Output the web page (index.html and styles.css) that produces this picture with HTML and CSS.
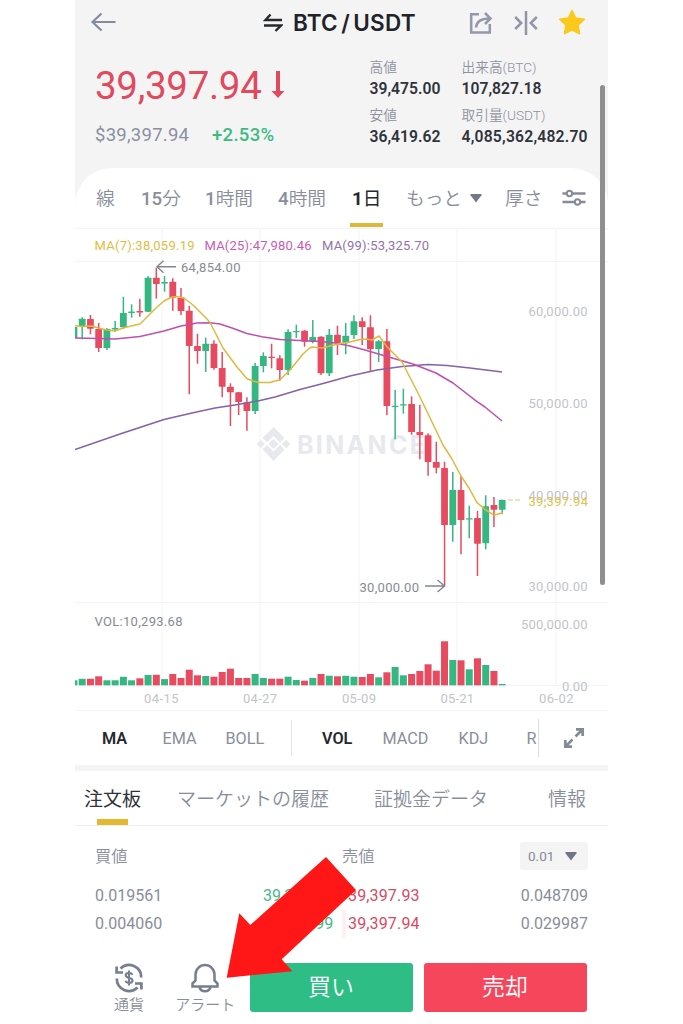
FILE: index.html
```html
<!DOCTYPE html>
<html lang="ja">
<head>
<meta charset="utf-8">
<title>BTC / USDT</title>
<link rel="stylesheet" href="styles.css">
</head>
<body>
<main class="phone">
  <header class="header">
    <div class="titlebar">
      <svg class="ic-back" width="27" height="20" viewBox="0 0 27 20"><path d="M25.500 10H2.500M11.500 1.500L2.500 10l9 8.500" fill="none" stroke="#848b9c" stroke-width="2.200"/></svg>
      <svg class="ic-swap" width="20" height="20" viewBox="0 0 20 20"><path d="M19 7H2.500L7.500 1.500M1 12.500h17L12.500 18" fill="none" stroke="#25282d" stroke-width="2.400"/></svg>
      <h1 class="pair">BTC / USDT</h1>
      <svg class="ic-share" width="24" height="24" viewBox="0 0 24 24"><path d="M10 3.200H2.200V21.600H20.800V13" fill="none" stroke="#9498ab" stroke-width="2.500"/><path d="M7 16.500c.5-6 5-9 13.500-9" fill="none" stroke="#9498ab" stroke-width="2.500"/><path d="M16 2l5.500 5.500-5.500 5.500" fill="none" stroke="#9498ab" stroke-width="2.500"/></svg>
      <svg class="ic-compare" width="24" height="26" viewBox="0 0 24 26"><path d="M12 1v24M1.200 7l6 6-6 6M22.800 7l-6 6 6 6" fill="none" stroke="#9195a5" stroke-width="2.500"/></svg>
      <svg class="ic-star" width="28" height="27" viewBox="0 0 28 27"><path d="M14 1.500l3.600 7.500 8.700 1.200-6.300 6 1.500 8.500L14 20.700l-7.500 4 1.500-8.500-6.300-6 8.700-1.200z" fill="#fbc91b" stroke="#fbc91b" stroke-width="1.600" stroke-linejoin="round"/></svg>
    </div>
    <div class="summary">
      <div class="price-box">
        <div class="price">39,397.94<svg class="ic-down" width="14" height="30" viewBox="0 0 14 30"><path d="M5 1h4v20h4.500L7 28 .5 21H5z" fill="#e04a5e"/></svg></div>
        <div class="sub"><span class="usd">$39,397.94</span><span class="change">+2.53%</span></div>
      </div>
      <dl class="stat"><dt>高値</dt><dd>39,475.00</dd><dt>安値</dt><dd>36,419.62</dd></dl>
      <dl class="stat stat-wide"><dt>出来高(BTC)</dt><dd>107,827.18</dd><dt>取引量(USDT)</dt><dd class="long">4,085,362,482.70</dd></dl>
    </div>
  </header>

  <div class="range-wrap">
    <nav class="ranges">
      <span>線</span><span><b>15</b>分</span><span><b>1</b>時間</span><span><b>4</b>時間</span>
      <span class="active"><b>1</b>日</span>
      <span class="more">もっと<svg width="12" height="9" viewBox="0 0 12 9"><path d="M1 0h10q1 0 .5 1.200L6 8.500.5 1.200Q0 0 1 0z" fill="#6f7a86"/></svg></span>
      <span class="depth">厚さ</span>
      <svg width="24" height="20" viewBox="0 0 24 20"><path d="M.5 5.500h23M.5 14h23" stroke="#858c98" stroke-width="2.600"/><circle cx="7.500" cy="5.500" r="2.700" fill="#fff" stroke="#858c98" stroke-width="2"/><circle cx="15.500" cy="14" r="2.700" fill="#fff" stroke="#858c98" stroke-width="2"/></svg>
    </nav>
  </div>

  <svg class="chart" width="533" height="483" viewBox="75 228 533 483">
    <path class="grid" d="M75 228.500H608M75 261.500H608M75 602.500H608M75 685.500H608M75 710.500H608M162 228V685M260 228V685M359 228V685M457 228V685M556 228V685"/>
    <g class="watermark">
      <path d="M273.500 427l11 11-4.500 4.500-6.500-6.500-6.500 6.500-4.500-4.500zM262.500 449.500l4.500-4.500 6.500 6.500 6.500-6.500 4.500 4.500-11 11.500zM256.500 444l4.200-4.200 4.200 4.200-4.200 4.200zM282 444l4.200-4.200 4.200 4.200-4.200 4.200zM268.500 444l5-5 5 5-5 5z"/>
      <text x="297" y="453.500" textLength="128">BINANCE</text>
    </g>
    <g id="candles"></g>
    <g id="volume"></g>
    <polyline class="ma ma99" points="75,449.500 120,434 164,419.500 192,413 215,408 235,405 260,400.500 275,397 300,389.500 325,383 350,376 377,370 402,366.500 428,364.500 447,365.500 470,368 502,372"/>
    <polyline class="ma ma25" points="75,338 98,338.500 115,339 140,336.500 164,331 181,326 197,323 210,322.700 220,324 232,328 247,333.500 262,336.700 280,339.500 300,340.500 320,341.500 335,343 350,346 365,350 387,356.500 413,364 436,373 453,383 477,401.700 485,407 502,421"/>
    <polyline class="ma ma7" points="75,325.700 82,326.500 92,326 98,328 107,330 115,331 123,328 131,326 140,324 148,316 156,308 164,301 172,297 177,296.500 184,298 193,305 200,312 207,319 210,322.500 223,348 237,367 247,378.700 253,381 260,382.500 270,382.500 280,379.700 290,370 303,354 309,348.500 312,347 322,348 330,346 340,343.500 350,342 360,339.500 366,339 372,340 379,336 387,346.700 402,362 418,393 432,422 443,445 452,459 461,476 469,488 477,502.700 486,510 494,515.300 503,512.700"/>
    <path d="M508 500h14" stroke="#ddc77c" stroke-dasharray="5 2"/>
    <path class="pointer" d="M176 266.700H157M163.500 260.800L157 266.700l6.500 6M425 586h19M437.500 580l7 6-7 6"/>
    <g class="t">
      <text x="94.500" y="250" textLength="100" class="c7">MA(7):38,059.19</text>
      <text x="204.500" y="250" textLength="107" class="c25">MA(25):47,980.46</text>
      <text x="322" y="250" textLength="107" class="c99">MA(99):53,325.70</text>
      <text x="181" y="272" textLength="59.500" class="mark">64,854.00</text>
      <text x="359.500" y="592" textLength="59.500" class="mark">30,000.00</text>
      <text x="94.500" y="625.500" textLength="88" class="mark">VOL:10,293.68</text>
    </g>
    <g class="t axis">
      <text x="528.500" y="316" textLength="59">60,000.00</text>
      <text x="528.500" y="408" textLength="59">50,000.00</text>
      <text x="528.500" y="500" textLength="59">40,000.00</text>
      <text x="528.500" y="591" textLength="59">30,000.00</text>
      <text x="521" y="628.500" textLength="66.500">500,000.00</text>
      <text x="562" y="691" textLength="25.500">0.00</text>
      <text x="144" y="702.500" textLength="34.500">04-15</text>
      <text x="243" y="702.500" textLength="34">04-27</text>
      <text x="342" y="702.500" textLength="34">05-09</text>
      <text x="440.500" y="702.500" textLength="33.500">05-21</text>
      <text x="539" y="702.500" textLength="34.500">06-02</text>
      <text x="528.500" y="506" textLength="59.500" class="last">39,397.94</text>
    </g>
  </svg>

  <nav class="indicators">
    <span class="on">MA</span><span>EMA</span><span>BOLL</span><i class="rule"></i>
    <span class="on">VOL</span><span>MACD</span><span>KDJ</span><span class="cut">R</span>
    <svg width="22" height="22" viewBox="0 0 22 22"><path d="M12.500 9.500L19 3M13 2.300h6.700V9M9.500 12.500L3 19M2.300 13v6.700H9" fill="none" stroke="#848b98" stroke-width="2.700"/></svg>
  </nav>

  <nav class="sections">
    <span class="on">注文板</span><span>マーケットの履歴</span><span>証拠金データ</span><span>情報</span>
  </nav>

  <section class="book">
    <div class="book-head"><span>買値</span><span>売値</span><button class="step">0.01<svg width="12" height="9" viewBox="0 0 12 9"><path d="M1 0h10q1 0 .5 1.200L6 8.500.5 1.200Q0 0 1 0z" fill="#6f7685"/></svg></button></div>
    <div class="book-row"><span>0.019561</span><span class="bid">39,397.92</span><span class="ask">39,397.93</span><span class="qty">0.048709</span></div>
    <div class="book-row tint"><span>0.004060</span><span class="bid">39,390.99</span><span class="ask">39,397.94</span><span class="qty">0.029987</span></div>
  </section>

  <footer class="footer">
    <div class="tool">
      <svg width="30" height="30" viewBox="0 0 30 30"><g fill="none" stroke="#777e8e" stroke-width="2.700"><path d="M6.500 5.500A12.200 12.200 0 0 1 27.200 14.500M2.800 15.500A12.200 12.200 0 0 0 23.500 24.500M2.600 3.500V9.500H9M27.400 26.500V20.500H21"/><path d="M18.300 11.800C17.500 9.500 11.700 9.300 11.700 12.300c0 3.300 6.800 1.800 6.800 5.200 0 3.200-6.200 3-7 .3M15 7.500v15" stroke-width="2.100"/></g></svg>
      <span>通貨</span>
    </div>
    <div class="tool alert">
      <svg width="30" height="30" viewBox="0 0 30 30"><path d="M2.500 23.500v-3l3-3V11.500a9.500 9.500 0 0 1 19 0V17.500l3 3v3zM9.500 24.500c2 5 9 5 11 0" fill="none" stroke="#777e8e" stroke-width="2.500"/></svg>
      <span>アラート</span>
    </div>
    <button class="buy">買い</button>
    <button class="sell">売却</button>
  </footer>

  <i class="scrollbar"></i>
  <svg class="callout" width="130" height="122" viewBox="226 857 130 122"><path d="M226.700 977.700L239.300 913.300 250.300 925 326 857 356 890 281.700 959.300 292.300 971.300z" fill="#ff1616"/></svg>
</main>
<script src="chart.js"></script>
</body>
</html>
```
FILE: styles.css
```css
* { box-sizing: border-box; }
body {
  margin: 0;
  background: #fff;
  font-family: Roboto, "Noto Sans CJK JP", sans-serif;
  color: #888e9b;
  overflow: hidden;
}
svg { display: block; }
button { border: 0; padding: 0; font: inherit; }
.phone {
  position: relative;
  width: 533px;
  height: 1024px;
  margin-left: 75px;
  display: flex;
  flex-direction: column;
}

/* header */
.header { height: 168px; background: #f4f4f5; }
.titlebar {
  height: 46px;
  padding-left: 15px;
  display: grid;
  grid-template-columns: 173px 30px 175px 46px 44px 30px;
  align-items: center;
}
.ic-back { margin-top: -2px; }
.ic-star { margin-top: -2px; }
.pair {
  margin: 0;
  font: 600 22.500px/46px Inter, sans-serif;
  letter-spacing: .2px;
  word-spacing: -2.500px;
  color: #202328;
  white-space: nowrap;
}
.ic-share { margin-left: 1px; margin-top: -1px; }
.summary {
  display: grid;
  grid-template-columns: 274.5px 92px 1fr;
  padding-left: 20px;
}
.price {
  height: 78px;
  display: flex;
  align-items: center;
  gap: 9px;
  font-size: 38.500px;
  letter-spacing: -.3px;
  color: #df4a5e;
}
.sub { display: flex; gap: 22px; font-size: 18.500px; line-height: 22px; }
.usd { width: 95px; letter-spacing: .25px; color: #8b90a1; }
.change { font-weight: 500; letter-spacing: .3px; color: #3dba82; }
.stat { margin: 11px 0 0; }
.stat dt, .stat dd { margin: 0; white-space: nowrap; }
.stat dt { font-size: 13.700px; line-height: 21px; font-weight: 350; color: #8e92a0; }
.stat dd { height: 27px; font-size: 15.700px; line-height: 21px; font-weight: 600; letter-spacing: 0; color: #30333b; }
.stat .long { letter-spacing: .2px; }

/* time ranges */
.range-wrap { height: 60px; background: #f4f4f5; }
.ranges {
  height: 60px;
  padding-left: 21px;
  background: #fff;
  border-radius: 37px 37px 0 0;
  display: grid;
  grid-template-columns: 45px 64px 73px 74px 54px 99px 57px 30px;
  align-items: center;
  font-size: 18.700px;
  line-height: 60px;
  font-weight: 350;
  white-space: nowrap;
}
.ranges > span { height: 60px; padding-top: 1px; }
.ranges b { font-weight: 500; }
.ranges .active {
  position: relative;
  color: #25282d;
  font-weight: 400;
}
.ranges .active b { font-weight: 700; }
.ranges .active::after {
  content: "";
  position: absolute;
  left: -2px;
  bottom: 1px;
  width: 33px;
  height: 4px;
  background: #dfb637;
}
.ranges .more { display: flex; align-items: center; gap: 8px; }
.depth { width: 36px; overflow: hidden; }

/* chart */
.grid { fill: none; stroke: #f3f3f5; stroke-width: 1; }
.watermark { fill: #e8e9ed; }
.watermark text { font: 700 25px Inter, sans-serif; }
.up { fill: #35b782; stroke: #35b782; }
.down { fill: #e84b60; stroke: #e84b60; }
.candle path { stroke-width: 1.500; }
.candle rect { stroke: none; }
.ma { fill: none; stroke-width: 1.500; stroke-linejoin: round; }
.ma7 { stroke: #ddb93f; }
.ma25 { stroke: #c04fae; }
.ma99 { stroke: #8562a6; }
.pointer { fill: none; stroke: #82878f; stroke-width: 1.400; }
.t { font: 400 13px Roboto, sans-serif; }
.c7 { fill: #dfbd45; }
.c25 { fill: #c95bb4; }
.c99 { fill: #9273ab; }
.mark { fill: #868b92; }
.axis { fill: #c2c4c8; }
.axis .last { fill: #dfc24c; }

/* indicators */
.indicators {
  height: 54px;
  padding-left: 27px;
  display: grid;
  grid-template-columns: 60.5px 63px 65.500px 31px 60.5px 76px 68px 36.500px 24px;
  align-items: center;
  font-size: 16.200px;
  white-space: nowrap;
}
.indicators .on { font-weight: 600; color: #25282d; }
.rule { width: 1px; height: 36px; background: #e3e4e8; }
.cut { width: 12px; height: 38px; line-height: 39px; overflow: hidden; border-right: 1px solid #dcdde2; }

/* section tabs */
.sections {
  height: 61px;
  padding-left: 9px;
  border-top: 6px solid #f4f4f5;
  border-bottom: 1px solid #eeeef0;
  display: grid;
  grid-template-columns: 93px 197px 174px 50px;
  font-size: 19px;
  line-height: 54px;
  font-weight: 350;
  white-space: nowrap;
}
.sections span { height: 54px; padding-top: 2px; }
.sections .on { position: relative; font-weight: 400; color: #303238; }
.sections .on::after {
  content: "";
  position: absolute;
  left: 13px;
  bottom: 0;
  width: 31px;
  height: 6px;
  background: #e3b930;
}

/* order book */
.book { height: 124px; padding: 16px 20px 0; }
.book-head {
  height: 40px;
  display: grid;
  grid-template-columns: 247px 178px 68px;
  font-size: 16.200px;
  line-height: 30px;
  font-weight: 350;
}
.step {
  height: 28px;
  padding: 0 11px 0 8px;
  display: flex;
  align-items: center;
  justify-content: space-between;
  border-radius: 3px;
  background: #f4f4f5;
  font-size: 13.500px;
  font-weight: 400;
  color: #858a96;
}
.book-row {
  height: 27.500px;
  display: grid;
  grid-template-columns: 168px 79px 100px 1fr;
  font-size: 16px;
  line-height: 28px;
}
.bid { color: #45b987; }
.ask { padding-left: 6px; letter-spacing: .15px; color: #d64b63; }
.tint .ask { box-shadow: inset 4px 0 #fdf1f3; }
.qty { text-align: right; }

/* footer */
.footer {
  height: 74px;
  padding: 13px 21px 0 32px;
  display: grid;
  grid-template-columns: 44px 98.500px 163px 163px;
}
.tool { display: flex; flex-direction: column; align-items: center; font-size: 15px; line-height: 24px; font-weight: 350; white-space: nowrap; }
.alert { padding-left: 10px; }
.buy, .sell { height: 49px; border-radius: 3px; color: #fff; font-size: 23px; line-height: 49px; font-weight: 350; }
.buy { background: #2ebd85; }
.sell { margin-left: 11px; margin-right: -11px; background: #f5465b; }

/* overlays */
.scrollbar { position: absolute; left: 525px; top: 85px; width: 5px; height: 500px; border-radius: 3px; background: #8f8f90; }
.callout { position: absolute; left: 151px; top: 857px; }
```
FILE: chart.js
```js
// Each row: direction, high, body top, body bottom, low, volume height
const rows = [
  ["g",325,327,338,343,5],
  ["g",317.3,318.7,326.7,339.3,6.5],["r",315,319,328.7,334.3,6.5],["r",323,329,348,352,9],["g",328,329,348,350,5],
  ["g",321,328,329.5,331.7,5],["g",296.7,313,327.3,329,8.5],["g",304.3,311.5,313,317.7,5],["r",298.7,311,312.5,316.7,7],
  ["g",276,277.7,311.7,312,10.3],["r",267.7,277.7,284,298.7,10.5],["g",276,282,283.5,291.7,6.2],["r",278.3,281.7,297.7,310.7,11.3],
  ["r",288,297.7,311,315,7.3],["r",306,310.7,346,394.3,15.6],["r",333.7,346,351,363.7,10],["g",337.7,343.7,351,372,9.3],
  ["r",340.3,343.7,368,369.7,8.6],["r",352,368,386.7,397.3,13.3],["r",383.3,386.7,392.3,426,16.6],["r",392,392.3,402,415,7.3],
  ["r",397.3,402.3,411,430.7,7.3],["g",363,366,411,414,11.3],["g",352.3,356,366,372.3,7.3],["r",343.7,356.7,358,368.3,6.6],
  ["r",355.3,358.3,370,380.7,6.6],["g",329.3,332,370,375,8.6],["g",324.7,331,332.3,338,5.3],["r",330,330.7,341.7,346.7,4.6],
  ["g",320,337,341.7,343.3,7.3],["r",336.3,336.7,373.3,375,11.3],["g",329,334.7,373.3,376,9.6],["r",325.7,334.7,343.3,355,9],
  ["g",323,335.7,343.3,354.3,9.5],["g",315.3,321.3,335,339,8.6],["r",317.3,321.3,327,345.3,8.3],["r",315.3,327.3,349,371.7,11.3],
  ["g",340,341.3,349,362,8],["r",329,341.3,406,415.3,13],["g",390,405.7,407,439.3,18.3],["g",388.7,404.2,405.5,413.7,10],
  ["r",396.3,404,432,434.7,11.3],["r",404.7,432,435,459.3,14.3],["r",433.3,435.3,462,475.7,21],["r",441.7,462,467.7,473.3,14.6],
  ["r",461.7,468,525,586,44],["g",472,490,525,541.7,25.3],["r",476,490,520,554.3,25],["g",505.7,518.2,519.5,538.3,16],
  ["r",511,518,543.7,576,27],["g",495.3,506.3,543.3,549.3,20.3],["r",497,505,509.7,527,14.3],["g",499.5,500,509.7,514.3,1.3]
];
let candles = "", volume = "";
rows.forEach(([d, hi, top, bottom, low, v], i) => {
  const x = 82.2 + 8.235 * (i - 1);
  const c = d === "g" ? "up" : "down";
  candles += `<g class="candle ${c}"><path d="M${x} ${hi}V${low}"/><rect x="${x - 3.4}" y="${top}" width="6.8" height="${bottom - top}" rx=".6"/></g>`;
  volume += `<rect class="${c}" stroke-width="0" x="${x - 3.5}" y="${685.3 - v}" width="7" height="${v}"/>`;
});
document.getElementById("candles").innerHTML = candles;
document.getElementById("volume").innerHTML = volume;
```
